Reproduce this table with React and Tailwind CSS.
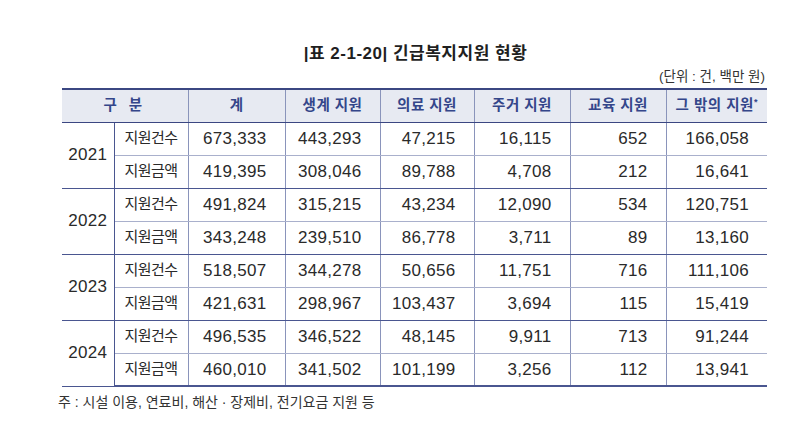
import React from 'react';

const rows = [
  { year: '2021', cnt: ['673,333', '443,293', '47,215', '16,115', '652', '166,058'], amt: ['419,395', '308,046', '89,788', '4,708', '212', '16,641'] },
  { year: '2022', cnt: ['491,824', '315,215', '43,234', '12,090', '534', '120,751'], amt: ['343,248', '239,510', '86,778', '3,711', '89', '13,160'] },
  { year: '2023', cnt: ['518,507', '344,278', '50,656', '11,751', '716', '111,106'], amt: ['421,631', '298,967', '103,437', '3,694', '115', '15,419'] },
  { year: '2024', cnt: ['496,535', '346,522', '48,145', '9,911', '713', '91,244'], amt: ['460,010', '341,502', '101,199', '3,256', '112', '13,941'] },
];

const headers = ['생계 지원', '의료 지원', '주거 지원', '교육 지원'];

const font = "font-['Liberation_Sans','Noto_Sans_CJK_KR',sans-serif]";

const App = () => {
  return (
    <div className={`w-[800px] h-[425px] bg-white text-[#2a2a2a] ${font}`}>
      <div className="ml-[62px] w-[705px] pt-[44px]">
        <h1 className="text-center text-[17px] leading-[20px] font-bold tracking-[0.5px] text-[#1f1f1f] pl-[2px]">
          |표 2-1-20| 긴급복지지원 현황
        </h1>
        <p className="mt-[5px] text-right text-[13.5px] leading-[16px] text-[#333] pr-[2px]">(단위 : 건, 백만 원)</p>
        <table className="mt-[3px] w-[705px] table-fixed border-collapse">
          <colgroup>
            <col className="w-[52px]" />
            <col className="w-[74px]" />
            <col className="w-[97px]" />
            <col className="w-[95px]" />
            <col className="w-[94px]" />
            <col className="w-[96px]" />
            <col className="w-[96px]" />
            <col className="w-[101px]" />
          </colgroup>
          <thead>
            <tr className="h-[33px] bg-[#e7eaf2] text-[14.5px] font-bold text-[#34468a]">
              <th colSpan={2} className="border-t-2 border-b border-t-[#3b4782] border-b-[#3b4782] border-r border-r-[#8a94bb] font-bold">
                <span className="tracking-[4px]">구 분</span>
              </th>
              <th className="border-t-2 border-b border-t-[#3b4782] border-b-[#3b4782] border-r border-r-[#8a94bb] font-bold">계</th>
              {headers.map((h) => (
                <th key={h} className="border-t-2 border-b border-t-[#3b4782] border-b-[#3b4782] border-r border-r-[#8a94bb] font-bold tracking-[0.5px]">
                  {h}
                </th>
              ))}
              <th className="border-t-2 border-b border-t-[#3b4782] border-b-[#3b4782] font-bold tracking-[0.5px]">
                그 밖의 지원<sup className="text-[9px] -top-[5px]">*</sup>
              </th>
            </tr>
          </thead>
          <tbody className="text-[17px] tracking-[0.3px]">
            {rows.map((r, gi) => (
              <React.Fragment key={r.year}>
                <tr className="h-[33px]">
                  <td rowSpan={2} className="text-center border-r border-r-[#4a5690] border-b border-b-[#4a5690]">{r.year}</td>
                  <td className="text-center text-[15px] tracking-[-0.5px] border-r border-r-[#8a94bb] border-b border-b-[#a9b0cc]">지원건수</td>
                  {r.cnt.map((v, i) => (
                    <td key={i} className={`text-right pr-[18px] border-b border-b-[#a9b0cc] ${i < 5 ? 'border-r border-r-[#8a94bb]' : ''}`}>{v}</td>
                  ))}
                </tr>
                <tr className="h-[33px]">
                  <td className={`text-center text-[15px] tracking-[-0.5px] border-r border-r-[#8a94bb] ${gi === 3 ? 'border-b-2' : 'border-b'} border-b-[#4a5690]`}>지원금액</td>
                  {r.amt.map((v, i) => (
                    <td key={i} className={`text-right pr-[18px] ${gi === 3 ? 'border-b-2' : 'border-b'} border-b-[#4a5690] ${i < 5 ? 'border-r border-r-[#8a94bb]' : ''}`}>{v}</td>
                  ))}
                </tr>
              </React.Fragment>
            ))}
          </tbody>
        </table>
        <p className="mt-[6px] -ml-[4px] text-[14px] leading-[18px] text-[#333]">주 : 시설 이용, 연료비, 해산 · 장제비, 전기요금 지원 등</p>
      </div>
    </div>
  );
};

export default App;
